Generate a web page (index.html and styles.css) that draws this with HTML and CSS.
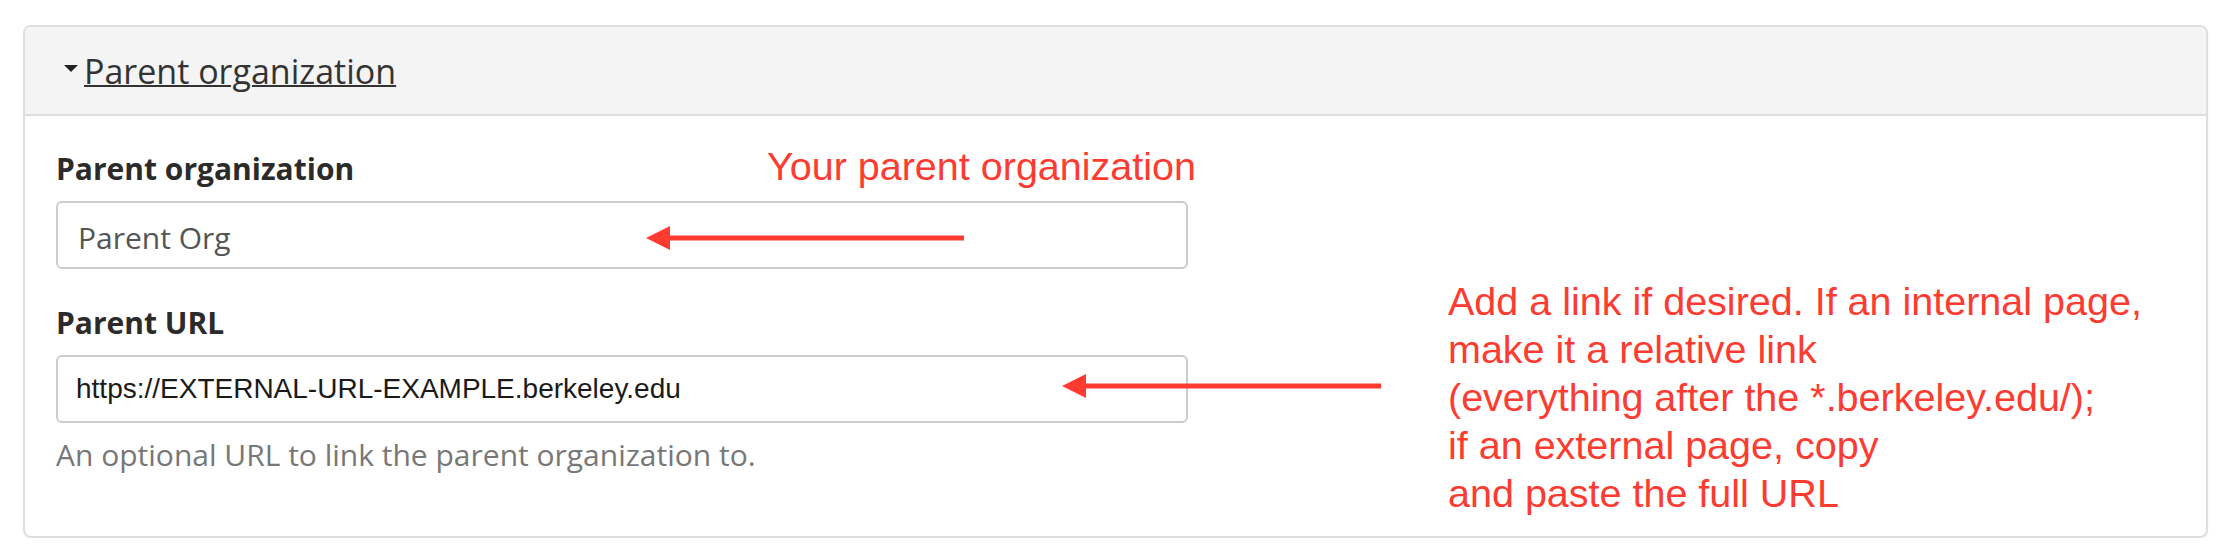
FILE: index.html
```html
<!DOCTYPE html>
<html lang="en">
<head>
<meta charset="utf-8">
<title>Parent organization</title>
<link rel="stylesheet" href="styles.css">
</head>
<body>
<div class="page">
  <section class="panel">
    <div class="panel-header">
      <span class="caret"></span>
      <a class="panel-title" href="#">Parent organization</a>
    </div>
    <div class="panel-body">
      <div class="field">
        <label class="field-label" for="org">Parent organization</label>
        <input class="field-input" id="org" type="text" value="Parent Org" readonly>
      </div>
      <div class="field">
        <label class="field-label" for="url">Parent URL</label>
        <input class="field-input field-input--url" id="url" type="text" value="https://EXTERNAL-URL-EXAMPLE.berkeley.edu" readonly>
        <div class="field-help">An optional URL to link the parent organization to.</div>
      </div>

      <div class="note note--org">Your parent organization</div>
      <svg class="arrow arrow--org" width="318" height="24" viewBox="0 0 318 24">
        <polygon points="0,12 24,0 24,24" fill="#fd3b31"/>
        <rect x="23" y="9.5" width="295" height="5" fill="#fd3b31"/>
      </svg>

      <div class="note note--url">Add a link if desired. If an internal page,<br>make it a relative link<br>(everything after the *.berkeley.edu/);<br>if an external page, copy<br>and paste the full URL</div>
      <svg class="arrow arrow--url" width="319" height="24" viewBox="0 0 319 24">
        <polygon points="0,12 24,0 24,24" fill="#fd3b31"/>
        <rect x="23" y="9.5" width="296" height="5" fill="#fd3b31"/>
      </svg>
    </div>
  </section>
</div>
</body>
</html>
```
FILE: styles.css
```css
html, body {
  margin: 0;
  padding: 0;
  background: #ffffff;
}

body {
  font-family: "Open Sans", "Liberation Sans", sans-serif;
  color: #333333;
}

.page {
  padding: 25px 22px 0 23px;
}

.panel {
  border: 2px solid #dedede;
  border-radius: 8px;
  overflow: hidden;
  box-shadow: 0 1px 2px rgba(0, 0, 0, 0.06);
}

.panel-header {
  height: 87px;
  background: #f4f4f4;
  border-bottom: 2px solid #dedede;
  display: flex;
  align-items: center;
  padding-left: 39px;
  gap: 6px;
}

.caret {
  width: 0;
  height: 0;
  border-left: 7px solid transparent;
  border-right: 7px solid transparent;
  border-top: 7px solid #222222;
  margin-top: -4px;
}

.panel-title {
  font-size: 34px;
  line-height: 46px;
  color: #333333;
  text-decoration: underline;
  text-decoration-thickness: 2px;
}

.panel-body {
  position: relative;
  padding: 33px 31px 61px 31px;
}

.field + .field {
  margin-top: 34px;
}

.field-label {
  display: block;
  font-size: 30px;
  font-weight: 700;
  line-height: 40px;
  color: #2b2b2b;
  margin-bottom: 12px;
}

.field-input {
  display: block;
  box-sizing: border-box;
  width: 1132px;
  height: 68px;
  margin: 0;
  padding: 4px 20px 0 20px;
  border: 2px solid #cccccc;
  border-radius: 6px;
  background: #ffffff;
  font-family: "Open Sans", sans-serif;
  font-size: 30px;
  color: #555555;
  outline: none;
}

.field-input--url {
  padding: 0 18px;
  font-family: "Liberation Sans", Arial, sans-serif;
  font-size: 28px;
  color: #1a1a1a;
}

.field-help {
  margin-top: 12px;
  font-size: 30px;
  line-height: 40px;
  color: #777777;
}

.note {
  position: absolute;
  font-family: "Liberation Sans", Arial, sans-serif;
  font-size: 39.5px;
  line-height: 48px;
  color: #fd3b31;
  white-space: nowrap;
}

.note--org {
  left: 742px;
  top: 26px;
}

.note--url {
  left: 1423px;
  top: 161px;
}

.arrow {
  position: absolute;
  display: block;
}

.arrow--org {
  left: 621px;
  top: 110px;
}

.arrow--url {
  left: 1037px;
  top: 258px;
}
```
